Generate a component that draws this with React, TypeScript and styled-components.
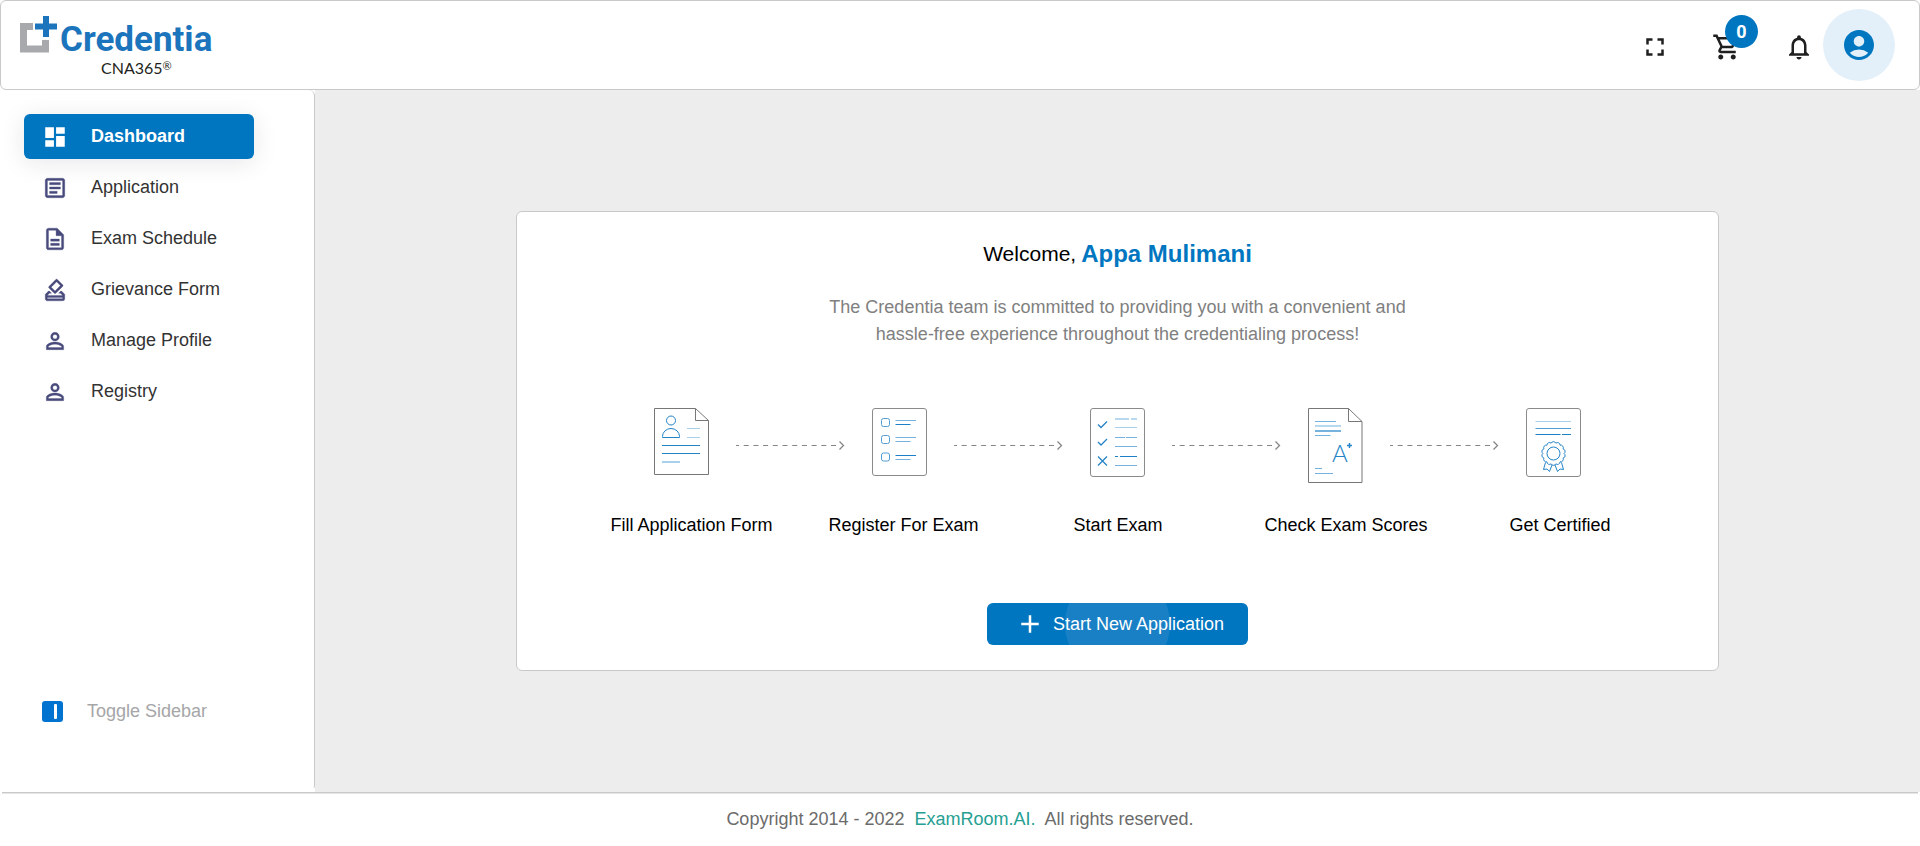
import React from "react";
import styled, { createGlobalStyle } from "styled-components";
import type { IconType } from "react-icons";
import {
  MdAccountCircle,
  MdAdd,
  MdDashboard,
  MdFullscreen,
  MdNotificationsNone,
  MdOutlineArticle,
  MdOutlineDescription,
  MdOutlineHowToVote,
  MdOutlineShoppingCart,
  MdPersonOutline,
} from "react-icons/md";

const blue = "#0076c1";
const line = "#c8c9cb";

const GlobalStyle = createGlobalStyle`
  *, *::before, *::after { box-sizing: border-box; }
  body {
    margin: 0;
    background: #fff;
    color: #000;
    font-family: "Liberation Sans", Arial, sans-serif;
    font-size: 18px;
    line-height: 27px;
  }
  button { font: inherit; cursor: pointer; }
`;

const Page = styled.div`
  min-height: 100vh;
  display: flex;
  flex-direction: column;
`;

const Header = styled.header`
  display: flex;
  align-items: center;
  justify-content: space-between;
  height: 90px;
  padding: 0 24px 0 19px;
  border: 1px solid ${line};
  border-radius: 6px;
`;

const Brand = styled.a`
  display: flex;
  align-items: flex-start;
  gap: 3px;
  text-decoration: none;
`;

const BrandText = styled.span`
  display: flex;
  flex-direction: column;
  padding-top: 6px;
`;

const BrandName = styled.span`
  color: #1c75bc;
  font: 700 35px/40px Roboto, sans-serif;
`;

const BrandProduct = styled.span`
  display: flex;
  padding-left: 41px;
  color: #231f20;
  font: 16px/16px Lato, sans-serif;
`;

const Registered = styled.span`
  font-size: 11px;
  line-height: 12px;
`;

const Tools = styled.div`
  display: flex;
  align-items: center;
  gap: 42px;
`;

const IconButton = styled.button`
  position: relative;
  display: flex;
  padding: 4px 0 0;
  border: 0;
  background: none;
  color: #1f1f1f;
  font-size: 30px;
`;

const Account = styled.div`
  display: flex;
  align-items: center;
  gap: 9px;
`;

const Avatar = styled.button`
  display: flex;
  align-items: center;
  justify-content: center;
  width: 72px;
  height: 72px;
  padding: 0;
  border: 0;
  border-radius: 50%;
  background: #e3f0f9;
  color: ${blue};
  font-size: 36px;
`;

const Badge = styled.span`
  position: absolute;
  left: 13px;
  top: -13px;
  width: 33px;
  height: 33px;
  border-radius: 50%;
  background: ${blue};
  color: #fff;
  font: 700 18px/33px Roboto, sans-serif;
  text-align: center;
`;

const Body = styled.div`
  flex: 1;
  display: flex;
`;

const Sidebar = styled.aside`
  flex: none;
  display: flex;
  flex-direction: column;
  justify-content: space-between;
  width: 315px;
  margin-bottom: 4px;
  padding: 24px 60px 63px 24px;
  border-right: 1px solid ${line};
  border-radius: 0 6px 2px 0;
`;

const NavList = styled.nav`
  display: flex;
  flex-direction: column;
  gap: 6px;
`;

const NavItem = styled.a<{ $active?: boolean }>`
  display: flex;
  align-items: center;
  gap: 23px;
  height: 45px;
  padding: 0 18px;
  border-radius: 6px;
  text-decoration: none;
  color: ${(p) => (p.$active ? "#fff" : "#333")};
  background: ${(p) => (p.$active ? blue : "transparent")};
  font-weight: ${(p) => (p.$active ? 700 : 400)};
  box-shadow: ${(p) => (p.$active ? "0 4px 24px rgba(30, 30, 60, 0.1)" : "none")};

  svg {
    font-size: 26px;
    color: ${(p) => (p.$active ? "#fff" : "#484a7c")};
  }

  path:not([fill="none"]) {
    stroke-width: ${(p) => (p.$active ? 0 : 0.3)};
  }
`;

const Toggle = styled.button`
  display: flex;
  align-items: center;
  gap: 24px;
  padding: 0 18px;
  border: 0;
  background: none;
  color: #a6a6a8;
`;

const Main = styled.main`
  flex: 1;
  display: flex;
  align-items: center;
  justify-content: center;
  background: #ededed;
`;

const Card = styled.section`
  display: flex;
  flex-direction: column;
  align-items: center;
  width: 75%;
  padding: 24px 24px 25px;
  border: 1px solid ${line};
  border-radius: 6px;
  background: #fff;
`;

const Welcome = styled.h1`
  display: flex;
  align-items: center;
  gap: 5px;
  margin: 0 0 22px;
  font-size: 21px;
  font-weight: 400;
  line-height: 36px;

  strong {
    color: ${blue};
    font-size: 24px;
  }
`;

const Intro = styled.p`
  max-width: 600px;
  margin: 0 0 60px;
  color: #808080;
  text-align: center;
`;

const Steps = styled.ol`
  display: grid;
  grid-template-columns: repeat(4, 218px) 142px;
  margin: 0 0 64px;
  padding: 0;
  list-style: none;
`;

const Step = styled.li`
  display: flex;
  flex-direction: column;
  gap: 28px;
  white-space: nowrap;
`;

const StepArt = styled.div`
  display: flex;
  align-items: center;
  gap: 27px;
  height: 76px;
  padding-left: 42px;

  svg { flex: none; }
`;

const StepLabel = styled.span<{ $short?: boolean }>`
  padding-left: ${(p) => (p.$short ? 27 : 0)}px;
`;

const StartButton = styled.button`
  display: flex;
  align-items: center;
  gap: 8px;
  height: 42px;
  padding: 0 24px 0 28px;
  border: 0;
  border-radius: 6px;
  background: radial-gradient(circle, #1a80c6 52px, ${blue} 53px);
  color: #fff;

  svg { font-size: 30px; }
`;

const Footer = styled.footer`
  margin: 0 2px;
  padding: 13px 0;
  border-top: 1px solid ${line};
  box-shadow: inset 0 1px 0 #e6e6e6;
  color: #6b6b6b;
  text-align: center;
  white-space: pre-wrap;

  a {
    color: #26a093;
    text-decoration: none;
  }
`;

const BrandMark = styled.svg`
  margin-top: 2px;
`;

const Logo = () => (
  <Brand href="#">
    <BrandMark width="37" height="37" viewBox="0 0 37 37" aria-hidden="true">
      <path d="M13 10.500H3.500V33H25.500V24" fill="none" stroke="#a7a9ac" strokeWidth="7" />
      <path d="M23 0h6v7.500h8v6h-8v7.500h-6v-7.500h-8v-6h8z" fill="#1c75bc" />
    </BrandMark>
    <BrandText>
      <BrandName>Credentia</BrandName>
      <BrandProduct>
        CNA365<Registered>®</Registered>
      </BrandProduct>
    </BrandText>
  </Brand>
);

const ToggleIcon = () => (
  <svg width="21" height="21" viewBox="0 0 21 21" aria-hidden="true">
    <rect width="21" height="21" rx="3" fill="#0073d1" />
    <rect x="12" y="3" width="3" height="15" rx="1" fill="#fff" />
  </svg>
);

const Arrow = () => (
  <svg width="109" height="10" viewBox="0 0 109 10" fill="none" stroke="#858585" aria-hidden="true">
    <path d="M0 4.500H103" strokeDasharray="5 4.700" strokeDashoffset="2" />
    <path d="M103.500 .5L107.500 4.500L103.500 8.500" strokeWidth="1.300" />
  </svg>
);

const Sheet = ({ children }: { children: React.ReactNode }) => (
  <svg width="56" height="76" viewBox="-1 0 56 76" fill="none" stroke="#2484c6" aria-hidden="true">
    {children}
  </svg>
);

const FormArt = () => (
  <Sheet>
    <path d="M.5.5H41.500L54.500 12.500V66.500H.5zM41.500.5V12.500H54.500" stroke="#777" />
    <circle cx="17" cy="12.500" r="4.500" />
    <path d="M8.500 29.500v-1a8.500 8 0 0 1 17 0v1z" />
    <path d="M33 20.500h13M33 29.500h13" stroke="#a9d0ea" />
    <path d="M8 37.500h38M8 45.500h38" />
    <path d="M8 54h18" stroke="#a9d0ea" strokeWidth="2" />
  </Sheet>
);

const ListArt = () => (
  <Sheet>
    <rect x=".5" y=".5" width="54" height="67" rx="2.500" stroke="#8a8a8a" />
    {[10.5, 27.5, 45].map((y) => (
      <rect key={y} x="9.500" y={y} width="8" height="8" rx="2" stroke="#4f9dd3" />
    ))}
    <path d="M23.500 12.500h20.500M23.500 29.500h20.500M23.500 33.500h15M23.500 51.500h15" stroke="#75b3de" />
    <path d="M23.500 16.500h15M23.500 47.500h20.500" stroke="#1c80c6" />
  </Sheet>
);

const ExamArt = () => (
  <Sheet>
    <rect x=".5" y=".5" width="54" height="68" rx="2.500" stroke="#8a8a8a" />
    <path d="M8 16.500l3 3l6-6M8 34l3 3l6-6M8 48.500l9 9M17 48.500l-9 9" strokeWidth="1.300" />
    <path d="M25 11h14M41 11h6" stroke="#b7d8ee" strokeWidth="2" />
    <path d="M25 19.500h22" stroke="#a9d0ea" />
    <path d="M25 29.500h10M36 29.500h11M25 38.500h22M25 57.500h22" stroke="#75b3de" />
    <path d="M25 48.500h3M30 48.500h17" stroke="#1c80c6" />
  </Sheet>
);

const ScoreArt = () => (
  <Sheet>
    <path d="M.5.5H40.500L54 13.500V74.500H.5zM40.500.5V13.500H54" stroke="#777" />
    <path d="M7 13.500h21M7 27.500h15.500M7 60.500h7M7 65.500h18" stroke="#75b3de" />
    <path d="M7 18h26" stroke="#b7d8ee" strokeWidth="2" />
    <path d="M7 23h26" stroke="#75b3de" strokeWidth="2" />
    <text x="24" y="54" fill="#2484c6" stroke="none" fontFamily="Lato, sans-serif" fontWeight="300" fontSize="24">
      A
    </text>
    <path d="M39 37.500h5M41.500 35v5" strokeWidth="1.500" />
  </Sheet>
);

/* Scalloped edge of the medal: one small outward arc for each lobe. */
const lobes = 14;
const rosette =
  Array.from({ length: lobes + 1 }, (_, i) => {
    const a = (i / lobes) * Math.PI * 2;
    const point = `${(27.5 + 10.6 * Math.cos(a)).toFixed(2)} ${(45.5 + 10.6 * Math.sin(a)).toFixed(2)}`;
    return i === 0 ? `M${point}` : `A2.600 2.600 0 0 1 ${point}`;
  }).join("") + "z";

const CertificateArt = () => (
  <Sheet>
    <rect x=".5" y=".5" width="54" height="68" rx="2.500" stroke="#8a8a8a" />
    <path d="M9.500 13.500h35.500" stroke="#a9d0ea" />
    <path d="M9.500 20.500h35.500" stroke="#4f9dd3" />
    <path d="M9.500 26.500h25M36 26.500h9" stroke="#1c80c6" />
    <path d={rosette} />
    <circle cx="27.500" cy="45.500" r="6.500" />
    <path d="M19.500 54.500L17.500 61.500l3.500-.5l2.500 2.500L26 57M35.500 54.500l2 7l-3.500-.5l-2.500 2.500L29 57" />
  </Sheet>
);

const navItems: { label: string; icon: IconType; active?: boolean }[] = [
  { label: "Dashboard", icon: MdDashboard, active: true },
  { label: "Application", icon: MdOutlineArticle },
  { label: "Exam Schedule", icon: MdOutlineDescription },
  { label: "Grievance Form", icon: MdOutlineHowToVote },
  { label: "Manage Profile", icon: MdPersonOutline },
  { label: "Registry", icon: MdPersonOutline },
];

const steps: { label: string; art: React.FC; short?: boolean }[] = [
  { label: "Fill Application Form", art: FormArt },
  { label: "Register For Exam", art: ListArt },
  { label: "Start Exam", art: ExamArt, short: true },
  { label: "Check Exam Scores", art: ScoreArt },
  { label: "Get Certified", art: CertificateArt, short: true },
];

export default function App() {
  return (
    <Page>
      <GlobalStyle />
      <Header>
        <Logo />
        <Tools>
          <IconButton aria-label="Full screen">
            <MdFullscreen />
          </IconButton>
          <IconButton aria-label="Cart">
            <MdOutlineShoppingCart />
            <Badge>0</Badge>
          </IconButton>
          <Account>
            <IconButton aria-label="Notifications">
              <MdNotificationsNone />
            </IconButton>
            <Avatar aria-label="Account">
              <MdAccountCircle />
            </Avatar>
          </Account>
        </Tools>
      </Header>
      <Body>
        <Sidebar>
          <NavList>
            {navItems.map(({ label, icon: Icon, active }) => (
              <NavItem key={label} href="#" $active={active}>
                <Icon />
                {label}
              </NavItem>
            ))}
          </NavList>
          <Toggle>
            <ToggleIcon />
            Toggle Sidebar
          </Toggle>
        </Sidebar>
        <Main>
          <Card>
            <Welcome>
              Welcome, <strong>Appa Mulimani</strong>
            </Welcome>
            <Intro>
              The Credentia team is committed to providing you with a convenient and hassle-free experience
              throughout the credentialing process!
            </Intro>
            <Steps>
              {steps.map(({ label, art: Art, short }, i) => (
                <Step key={label}>
                  <StepArt>
                    <Art />
                    {i < steps.length - 1 && <Arrow />}
                  </StepArt>
                  <StepLabel $short={short}>{label}</StepLabel>
                </Step>
              ))}
            </Steps>
            <StartButton>
              <MdAdd />
              Start New Application
            </StartButton>
          </Card>
        </Main>
      </Body>
      <Footer>
        {"Copyright 2014 - 2022  "}
        <a href="#">ExamRoom.AI.</a>
        {"  All rights reserved."}
      </Footer>
    </Page>
  );
}
